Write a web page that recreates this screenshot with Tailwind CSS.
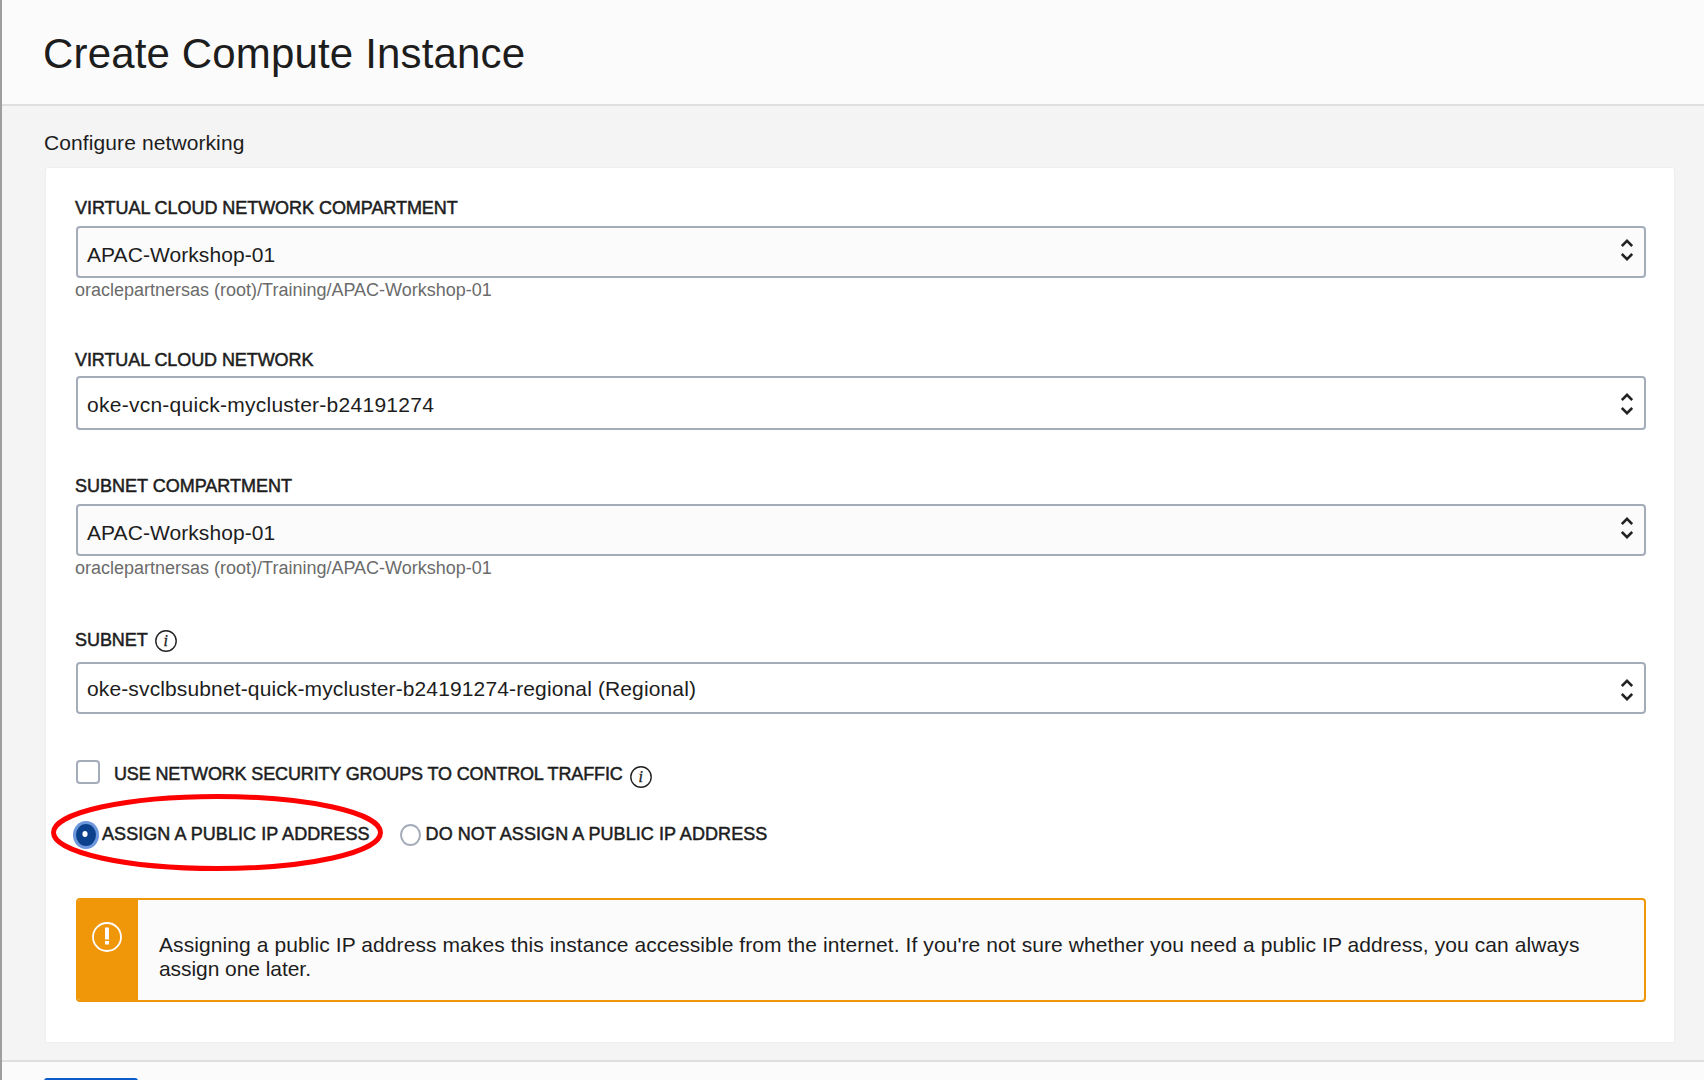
<!DOCTYPE html>
<html lang="en">
<head>
<meta charset="utf-8">
<title>Create Compute Instance</title>
<script src="https://cdn.jsdelivr.net/npm/@tailwindcss/browser@4"></script>
</head>
<body class="h-[1080px] overflow-hidden bg-[#f4f4f4] font-['Liberation_Sans',Arial,sans-serif] text-[21px] leading-6 text-[#1d1d1d]">
<div class="flex h-[1080px] flex-col border-l-2 border-[#9e9e9e]">
  <header class="flex h-[106px] shrink-0 items-center border-b-2 border-[#dfdfdf] bg-[#fbfbfb] pl-[41px]">
    <h1 class="pt-1 text-[42px] leading-[48px] tracking-[0.16px] whitespace-nowrap">Create Compute Instance</h1>
  </header>
  <main class="flex h-[954px] shrink-0 flex-col pr-[30px] pl-[42px]">
    <h2 class="-ml-px h-[62px] pt-[25px] pl-px tracking-[0.1px]">Configure networking</h2>
    <section class="ml-0.5 flex h-[874px] flex-col rounded-xs bg-white pr-7 pl-[30px] shadow-[0_0_2px_rgba(0,0,0,0.08)]">
      <div class="h-[150px] pt-[29px]">
        <div class="-ml-px h-[29px] text-[18px] leading-[23px] tracking-[-0.05px] [-webkit-text-stroke:0.5px]">VIRTUAL CLOUD NETWORK COMPARTMENT</div>
        <div class="flex h-[52px] items-start justify-between rounded border-2 border-[#a5acb9] bg-[#fbfbfb] pt-[15px] pr-[11px] pl-[9px]">
          <span class="tracking-[0.07px]">APAC-Workshop-01</span>
          <svg class="-mt-[5px] h-[24px] w-[12px]" viewBox="0 0 12 24" fill="none" stroke="#222" stroke-width="2.6"><path d="M.8 8 6 2.8 11.2 8M.8 16 6 21.2 11.2 16"/></svg>
        </div>
        <div class="-ml-px text-[18px] text-[#6b6b6b]">oraclepartnersas (root)/Training/APAC-Workshop-01</div>
      </div>
      <div class="h-[130px] pt-[32px]">
        <div class="-ml-px h-[26px] text-[18px] leading-[21px] tracking-[-0.08px] [-webkit-text-stroke:0.5px]">VIRTUAL CLOUD NETWORK</div>
        <div class="flex h-[54px] items-start justify-between rounded border-2 border-[#a5acb9] pt-[15px] pr-[11px] pl-[9px]">
          <span class="tracking-[0.26px]">oke-vcn-quick-mycluster-b24191274</span>
          <svg class="-mt-px h-[24px] w-[12px]" viewBox="0 0 12 24" fill="none" stroke="#222" stroke-width="2.6"><path d="M.8 8 6 2.8 11.2 8M.8 16 6 21.2 11.2 16"/></svg>
        </div>
      </div>
      <div class="h-[158px] pt-[27px]">
        <div class="-ml-px h-[29px] text-[18px] leading-[23px] [-webkit-text-stroke:0.5px]">SUBNET COMPARTMENT</div>
        <div class="flex h-[52px] items-start justify-between rounded border-2 border-[#a5acb9] bg-[#fbfbfb] pt-[15px] pr-[11px] pl-[9px]">
          <span class="tracking-[0.07px]">APAC-Workshop-01</span>
          <svg class="-mt-[5px] h-[24px] w-[12px]" viewBox="0 0 12 24" fill="none" stroke="#222" stroke-width="2.6"><path d="M.8 8 6 2.8 11.2 8M.8 16 6 21.2 11.2 16"/></svg>
        </div>
        <div class="-ml-px text-[18px] text-[#6b6b6b]">oraclepartnersas (root)/Training/APAC-Workshop-01</div>
      </div>
      <div class="h-[154px] pt-[22px]">
        <div class="-ml-px flex h-[34px] items-start gap-1.5 text-[18px] tracking-[-0.06px] [-webkit-text-stroke:0.5px]"><span>SUBNET</span><svg class="mt-px size-[24px] [-webkit-text-stroke:0.2px]" viewBox="0 0 24 24"><circle cx="12" cy="12" r="10.2" fill="none" stroke="#222" stroke-width="1.4"/><text x="11.8" y="16.6" text-anchor="middle" font-family="Liberation Serif" font-style="italic" font-size="16" fill="#222" stroke="#222" stroke-width=".3">i</text></svg></div>
        <div class="flex h-[52px] items-start justify-between rounded border-2 border-[#a5acb9] pt-[13px] pr-[11px] pl-[9px]">
          <span class="tracking-[0.13px]">oke-svclbsubnet-quick-mycluster-b24191274-regional (Regional)</span>
          <svg class="mt-px h-[24px] w-[12px]" viewBox="0 0 12 24" fill="none" stroke="#222" stroke-width="2.6"><path d="M.8 8 6 2.8 11.2 8M.8 16 6 21.2 11.2 16"/></svg>
        </div>
      </div>
      <div class="flex h-[50px] items-start text-[18px] [-webkit-text-stroke:0.5px]">
        <span class="size-6 rounded border-2 border-[#a5acb9]"></span>
        <span class="mt-0.5 ml-[14px] tracking-[-0.14px]">USE NETWORK SECURITY GROUPS TO CONTROL TRAFFIC</span>
        <svg class="mt-[5px] ml-[6px] size-[24px] [-webkit-text-stroke:0.2px]" viewBox="0 0 24 24"><circle cx="12" cy="12" r="10.2" fill="none" stroke="#222" stroke-width="1.4"/><text x="11.8" y="16.6" text-anchor="middle" font-family="Liberation Serif" font-style="italic" font-size="16" fill="#222" stroke="#222" stroke-width=".3">i</text></svg>
      </div>
      <div class="relative -ml-[3px] flex h-[88px] items-start pt-[11px] text-[18px] tracking-[0.07px] [-webkit-text-stroke:0.5px]">
        <svg class="h-7 w-[26px]" viewBox="0 0 26 28"><ellipse cx="13" cy="14" rx="13" ry="14" fill="#6d97dc"/><ellipse cx="13" cy="14" rx="10" ry="11" fill="#0b418c"/><ellipse cx="12" cy="13" rx="2.6" ry="3" fill="#fff"/></svg>
        <span class="mt-px ml-[3px]">ASSIGN A PUBLIC IP ADDRESS</span>
        <svg class="mt-[3px] ml-[30px] h-[22px] w-[21px]" viewBox="0 0 21 22"><ellipse cx="10.5" cy="11" rx="9.5" ry="10" fill="#fff" stroke="#a5acb9" stroke-width="2"/></svg>
        <span class="mt-px ml-[5px]">DO NOT ASSIGN A PUBLIC IP ADDRESS</span>
        <svg class="absolute -top-4 -left-[22px] h-[77px] w-[332px]" viewBox="0 0 332 77"><ellipse cx="166" cy="38.5" rx="163.5" ry="36" fill="none" stroke="#fe0000" stroke-width="5"/></svg>
      </div>
      <div class="flex h-[104px] overflow-hidden rounded border-2 border-[#f09709] bg-[#fbfbfb]">
        <div class="flex w-[60px] shrink-0 justify-center bg-[#f09709] pt-[22px] pr-0.5">
          <svg class="size-[30px]" viewBox="0 0 30 30"><circle cx="15" cy="15" r="14" fill="none" stroke="#fff" stroke-width="1.8"/><path d="M13 5.5h4v12h-4zM13 19h4v3.5h-4z" fill="#fff"/></svg>
        </div>
        <p class="pt-[33px] pl-[21px] whitespace-nowrap"><span class="tracking-[0.086px]">Assigning a public IP address makes this instance accessible from the internet. If you're not sure whether you need a public IP address, you can always</span><br><span class="tracking-[-0.06px]">assign one later.</span></p>
      </div>
    </section>
  </main>
  <footer class="flex grow border-t-2 border-[#dfdfdf] bg-[#fbfbfb] pt-4 pl-[42px]"><div class="h-9 w-[94px] shrink-0 rounded-t-[3px] bg-[#0b5ccb]"></div></footer>
</div>
</body>
</html>
